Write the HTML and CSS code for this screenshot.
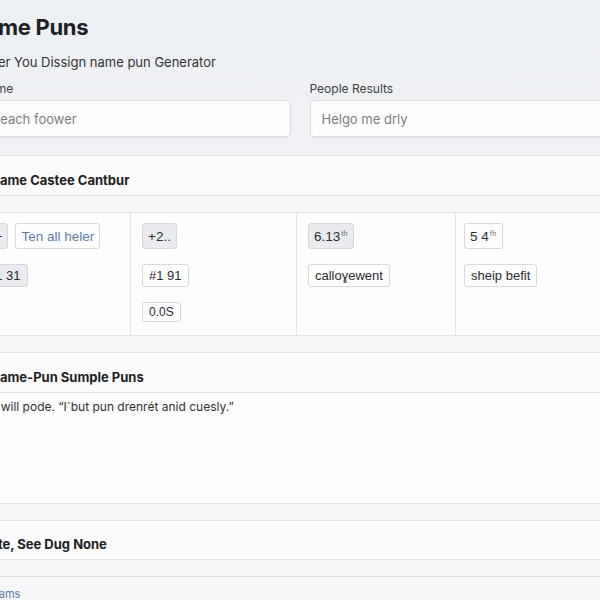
FILE: index.html
```html
<!DOCTYPE html>
<html lang="en">

<head>
    <meta charset="UTF-8">
    <meta name="viewport" content="width=device-width, initial-scale=1.0">
    <title>Name Puns</title>
    <link rel="stylesheet" href="styles.css">
</head>

<body>
    <div class="page">
        <header class="hero">
            <h1>Name Puns</h1>
            <p class="subtitle">Over You Dissign name pun Generator</p>

            <div class="fields">
                <div class="field">
                    <label for="name_input">Name</label>
                    <input type="text" id="name_input" placeholder="Reach foower">
                </div>
                <div class="field">
                    <label for="people_input">People Results</label>
                    <input type="text" id="people_input" placeholder="Helgo me drly">
                </div>
            </div>
        </header>

        <section class="card">
            <div class="card_head">Name Castee Cantbur</div>
            <div class="card_strip"></div>
            <div class="chip_grid">
                <div class="cell">
                    <div class="chip_row row1">
                        <span class="chip gray">4+</span>
                        <span class="chip link">Ten all heler</span>
                    </div>
                    <div class="chip_row row2">
                        <span class="chip gray">#1 31</span>
                    </div>
                </div>
                <div class="cell">
                    <div class="chip_row row1">
                        <span class="chip gray">+2..</span>
                    </div>
                    <div class="chip_row row2">
                        <span class="chip">#1 91</span>
                    </div>
                    <div class="chip_row row3">
                        <span class="chip">0.0S</span>
                    </div>
                </div>
                <div class="cell">
                    <div class="chip_row row1">
                        <span class="chip gray">6.13<sup>th</sup></span>
                    </div>
                    <div class="chip_row row2">
                        <span class="chip">calloɣewent</span>
                    </div>
                </div>
                <div class="cell">
                    <div class="chip_row row1">
                        <span class="chip">5 4<sup>fh</sup></span>
                    </div>
                    <div class="chip_row row2">
                        <span class="chip">sheip befit</span>
                    </div>
                </div>
            </div>
        </section>

        <section class="card">
            <div class="card_head">Name-Pun Sumple Puns</div>
            <div class="card_body">
                <p>It will pode. “I´but pun drenrét anid cuesly.”</p>
            </div>
        </section>

        <section class="card last">
            <div class="card_head">Note, See Dug None</div>
        </section>

        <footer class="footer">
            <a href="#">Teams</a>
        </footer>
    </div>
</body>

</html>
```

FILE: styles.css
```css
* {
    box-sizing: border-box;
    margin: 0;
    padding: 0;
    font-family: 'Inter', 'Liberation Sans', sans-serif;
}

body {
    background-color: #f5f6f8;
    color: #222;
    overflow: hidden;
}

/* page is a bit wider than the window, shifted left */
.page {
    width: 640px;
    margin-left: -20px;
}

.hero {
    padding: 12px 0 18px;
    background: linear-gradient(180deg, #eceff3 0%, #f0f2f5 100%);
}

.hero h1 {
    font-size: 22px;
    line-height: 30px;
    font-weight: 700;
    color: #1d1f22;
    letter-spacing: -0.3px;
    margin-left: -11px;
}

.subtitle {
    margin-top: 10px;
    font-size: 13px;
    line-height: 20px;
    color: #333;
    padding-left: 1px;
}

.fields {
    margin-top: 9px;
    display: grid;
    grid-template-columns: 1fr 1fr;
    gap: 19px;
}

.field label {
    display: block;
    font-size: 12px;
    line-height: 16px;
    color: #3d3f42;
    margin-bottom: 3px;
}

.field input {
    width: 100%;
    height: 37px;
    padding: 0 11px;
    font-size: 13px;
    border: 1px solid #d9dce0;
    border-radius: 4px;
    background-color: #fdfdfd;
    color: #333;
    box-shadow: 0 1px 2px rgba(0, 0, 0, 0.04);
}

.field input::placeholder {
    color: #7b7e82;
}

.card {
    background-color: #fbfbfb;
    border-top: 1px solid #e2e4e7;
    border-bottom: 1px solid #e2e4e7;
    margin-bottom: 16px;
}

.card_head {
    padding: 16px 10px 7px;
    font-size: 13px;
    line-height: 16px;
    font-weight: 700;
    color: #1f2124;
}

.card.last .card_head {
    padding: 15px 10px 7px;
    margin-left: -10px;
}

.card_strip {
    height: 17px;
    border-top: 1px solid #dcdee1;
    background-color: #f6f7f8;
}

.chip_grid {
    display: grid;
    grid-template-columns: 161px 166px 159px 1fr;
    margin-left: -10px;
    border-top: 1px solid #dcdee1;
    background-color: #fdfdfd;
}

.cell {
    min-height: 122px;
    padding: 10px 11px;
    display: flex;
    flex-direction: column;
    align-items: flex-start;
    gap: 15px;
    border-right: 1px solid #e3e5e8;
}

.cell:last-child {
    border-right: none;
    padding-left: 8px;
}

.chip_row {
    display: flex;
    gap: 7px;
}

.chip {
    display: inline-flex;
    align-items: center;
    padding: 0 6px;
    font-family: 'Liberation Sans', Arial, sans-serif;
    font-size: 13px;
    color: #2a2c2f;
    background-color: #fefefe;
    border: 1px solid #d6d9dd;
    border-radius: 3px;
    white-space: nowrap;
}

.row1 .chip {
    height: 26px;
    padding: 0 5px;
    font-size: 13.5px;
}

.row2 .chip {
    height: 23px;
}

.row3 .chip {
    height: 20px;
    font-size: 12px;
}

.chip.gray {
    background-color: #e9ebee;
    border-color: #d3d6da;
}

.chip.link {
    color: #5b7ea6;
}

.chip sup {
    font-size: 7px;
    color: #666;
    margin-left: 1px;
    align-self: flex-start;
    margin-top: 5px;
}

.card_body {
    min-height: 111px;
    padding: 6px 10px;
    border-top: 1px solid #dcdee1;
    background-color: #fdfdfd;
}

.card_body p {
    font-size: 12px;
    line-height: 16px;
    color: #2e3033;
}

.footer {
    border-top: 1px solid #dcdee1;
    padding: 5px 10px 12px 6px;
    background-color: #f6f7f8;
}

.footer a {
    font-size: 11px;
    color: #5b7ea6;
    text-decoration: none;
}
```
